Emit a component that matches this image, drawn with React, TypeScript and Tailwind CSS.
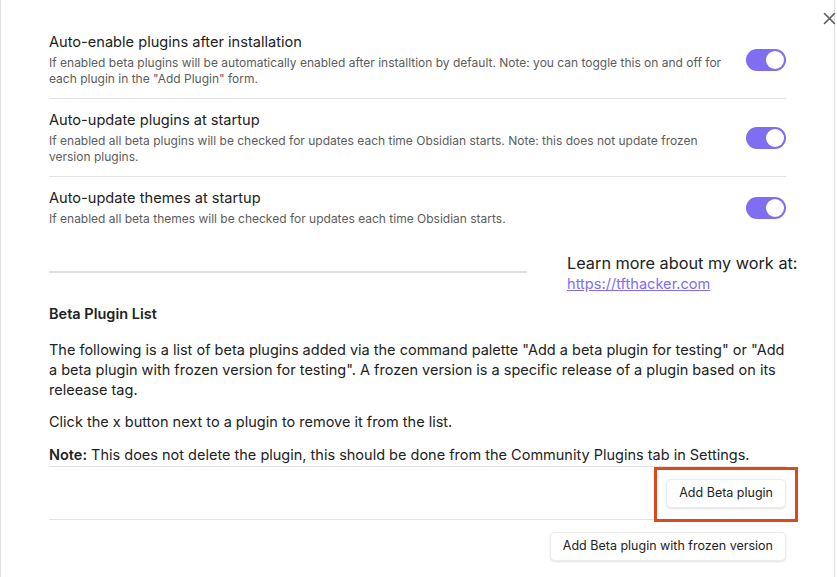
import React from "react";

const Toggle = () => (
  <div className="w-[40px] h-[22px] rounded-full bg-[#7f6df2] flex items-center justify-end pr-[2px] shrink-0">
    <div className="w-[18px] h-[18px] rounded-full bg-white" />
  </div>
);

const Setting = ({
  title,
  desc,
  border,
}: {
  title: string;
  desc: string;
  border?: boolean;
}) => (
  <div
    className={`flex items-center py-[11px] ${border ? "border-t border-[#e3e3e3]" : ""}`}
  >
    <div className="flex-1 pr-[24px]">
      <div className="text-[14.6px] leading-[20px] text-[#222]">{title}</div>
      <div className="text-[12px] leading-[16px] text-[#5c5c5c] mt-[3px]">{desc}</div>
    </div>
    <Toggle />
  </div>
);

const Btn = ({ children }: { children: React.ReactNode }) => (
  <button className="h-[29px] px-[12px] rounded-[5px] bg-white text-[12.5px] text-[#222] border border-[#ececec] shadow-[0_1px_2px_rgba(0,0,0,0.12)] whitespace-nowrap">
    {children}
  </button>
);

export default function App() {
  return (
    <div
      className="relative w-[837px] h-[577px] bg-white overflow-hidden"
      style={{ fontFamily: "Inter, 'Noto Sans', sans-serif" }}
    >
      <div className="w-[835px] h-[577px] border-l border-r border-[#e0e0e0] pl-[48px] pr-[48px] pt-[21px]">
        <div className="absolute left-[823px] top-[12px]">
          <svg width="13" height="13" viewBox="0 0 13 13">
            <path d="M1.5 1.5 L11.5 11.5 M11.5 1.5 L1.5 11.5" stroke="#5a5a5a" strokeWidth="1.6" strokeLinecap="round" />
          </svg>
        </div>
        <div className="w-[737px]">
          <Setting
            title="Auto-enable plugins after installation"
            desc={'If enabled beta plugins will be automatically enabled after installtion by default. Note: you can toggle this on and off for each plugin in the "Add Plugin" form.'}
          />
          <Setting
            border
            title="Auto-update plugins at startup"
            desc="If enabled all beta plugins will be checked for updates each time Obsidian starts. Note: this does not update frozen version plugins."
          />
          <Setting
            border
            title="Auto-update themes at startup"
            desc="If enabled all beta themes will be checked for updates each time Obsidian starts."
          />

          <div className="flex items-center mt-[15px]">
            <div className="w-[478px] shrink-0 h-[2px] bg-[#e0e0e0] mt-[-4px]" />
            <div className="ml-[40px] leading-[20px] text-[#222] whitespace-nowrap">
              <div className="text-[16.3px]">Learn more about my work at:</div>
              <a className="text-[14.6px] text-[#7f6df2] underline" href="#">https://tfthacker.com</a>
            </div>
          </div>

          <div className="mt-[10px] text-[14.5px] leading-[20px] font-semibold text-[#222]">Beta Plugin List</div>
          <p className="mt-[16px] text-[14.5px] leading-[20px] text-[#222]">
            The following is a list of beta plugins added via the command palette "Add a beta plugin for testing" or "Add a beta plugin with frozen version for testing". A frozen version is a specific release of a plugin based on its releease tag.
          </p>
          <p className="mt-[12px] text-[14.5px] leading-[20px] text-[#222]">
            Click the x button next to a plugin to remove it from the list.
          </p>
          <p className="mt-[13px] text-[14.5px] leading-[20px] text-[#222]">
            <span className="font-semibold">Note:</span> This does not delete the plugin, this should be done from the Community Plugins tab in Settings.
          </p>
          <div className="border-t border-[#e3e3e3] mt-[1px] pt-[12px] pb-[11px] flex justify-end">
            <div className="relative">
              <Btn>Add Beta plugin</Btn>
              <div className="absolute left-[-12px] right-[-12px] top-[-12px] bottom-[-14px] border-[3px] border-[#db4a1c]" />
            </div>
          </div>
          <div className="border-t border-[#e3e3e3] pt-[12px] flex justify-end">
            <Btn>Add Beta plugin with frozen version</Btn>
          </div>
        </div>
      </div>
    </div>
  );
}
